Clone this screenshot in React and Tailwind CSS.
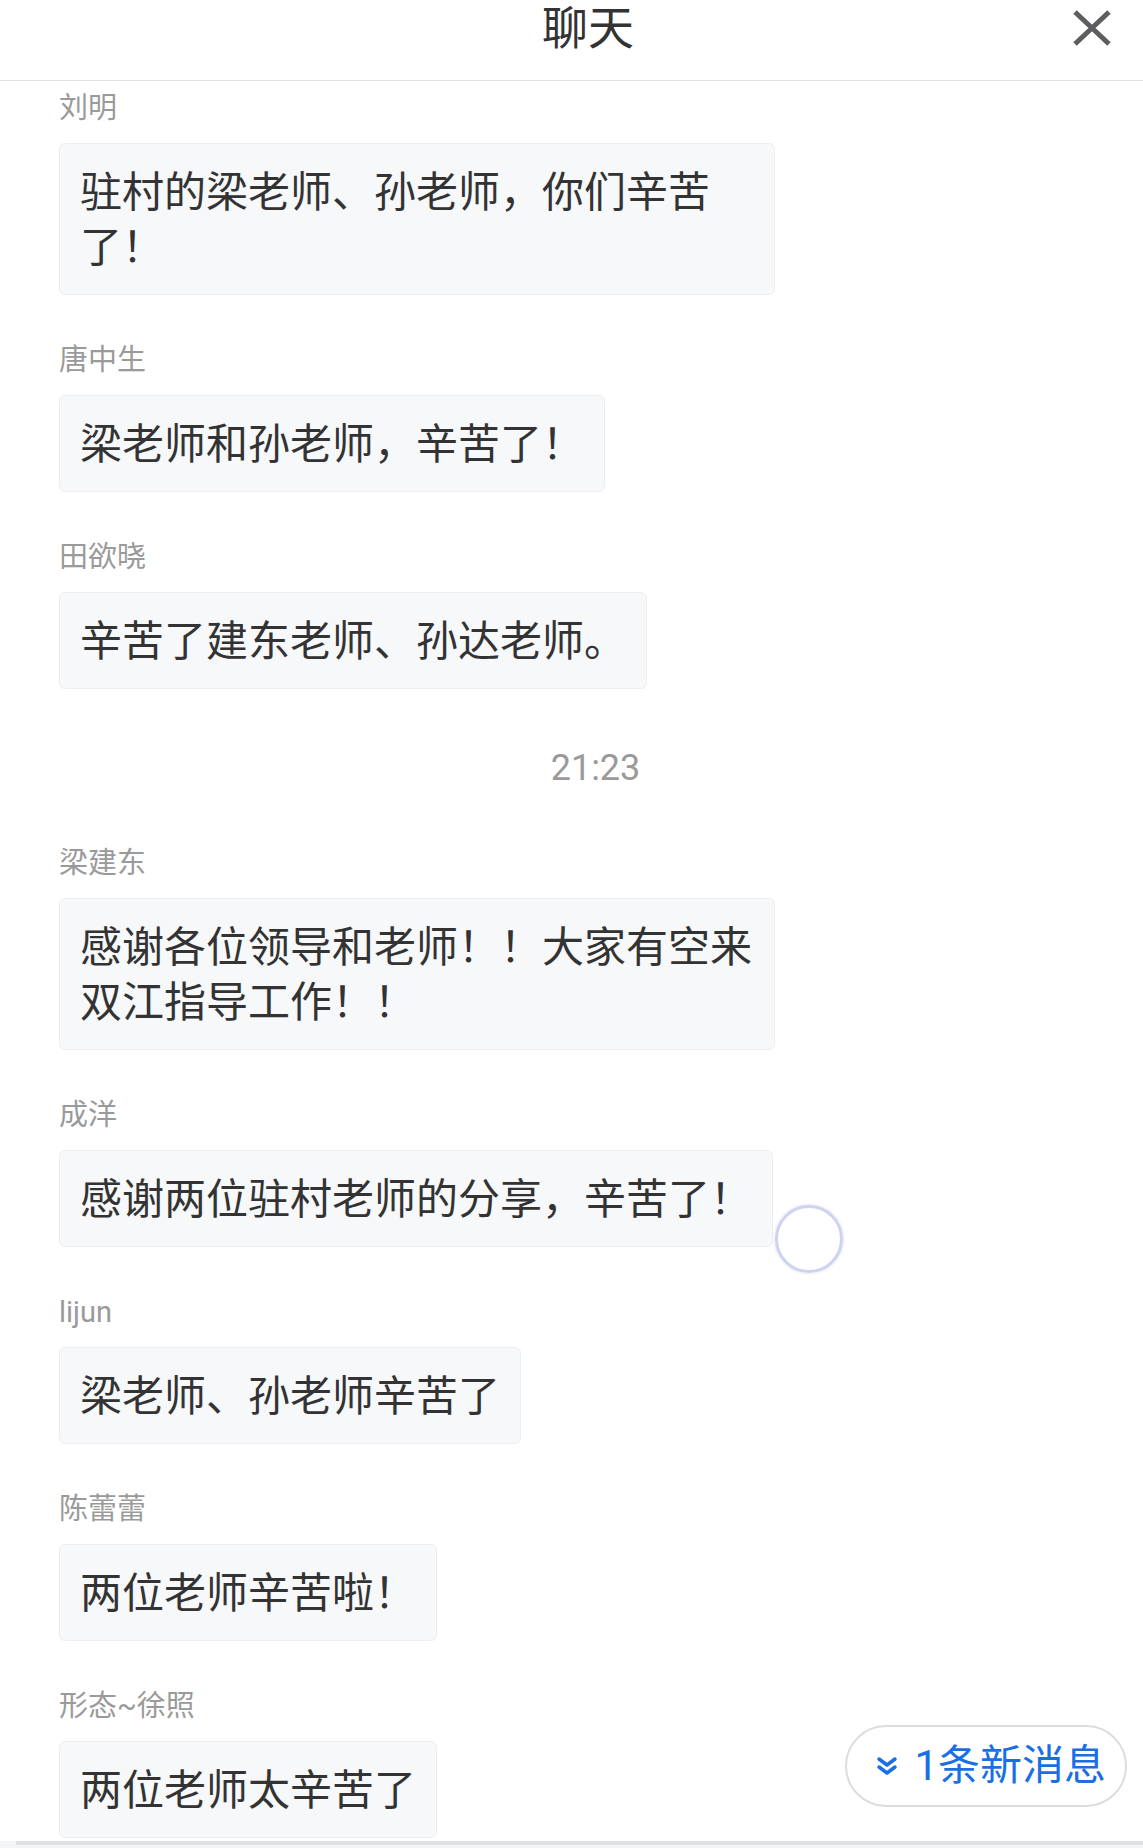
import React from "react";

const FONT = { fontFamily: 'Roboto, "Noto Sans CJK SC", "Noto Sans", sans-serif' };

// Chat history, in display order. A "time" entry is a centred timestamp row.
const MESSAGES = [
  { name: "刘明", text: "驻村的梁老师、孙老师，你们辛苦了！" },
  { name: "唐中生", text: "梁老师和孙老师，辛苦了！" },
  { name: "田欲晓", text: "辛苦了建东老师、孙达老师。" },
  { time: "21:23" },
  { name: "梁建东", text: "感谢各位领导和老师！！大家有空来双江指导工作！！" },
  { name: "成洋", text: "感谢两位驻村老师的分享，辛苦了！" },
  { name: "lijun", text: "梁老师、孙老师辛苦了" },
  { name: "陈蕾蕾", text: "两位老师辛苦啦！" },
  { name: "形态~徐照", text: "两位老师太辛苦了" },
];

function CloseIcon() {
  return (
    <svg width="40" height="36" viewBox="0 0 40 36" fill="none">
      <path d="M3 2 L37 34 M37 2 L3 34" stroke="#5c5d60" strokeWidth="5" />
    </svg>
  );
}

function ChevronsDown() {
  return (
    <svg width="22" height="20" viewBox="0 0 22 20" fill="none">
      <path
        d="M3 3 L11 9 L19 3 M3 11 L11 17 L19 11"
        stroke="#1a6fe3"
        strokeWidth="3.5"
        strokeLinecap="round"
        strokeLinejoin="round"
      />
    </svg>
  );
}

function Message({ name, text }) {
  return (
    <div className="flex flex-col items-start">
      <div className="text-[29px] leading-[34px] text-[#9a9a9a]">{name}</div>
      <div className="mt-[18px] max-w-[716px] rounded-[6px] border border-[#eceef1] bg-[#f7f8fa] px-[20px] pb-[19px] pt-[21px] text-[42px] leading-[55px] text-[#333333]">
        {text}
      </div>
    </div>
  );
}

export default function App() {
  return (
    <div className="relative h-[1848px] w-full overflow-hidden bg-white" style={FONT}>
      {/* ── Header ───────────────────────────────────────────── */}
      <div className="h-[81px] border-b border-[#e3e3e3]">
        <div className="flex h-[56px] items-center">
          <div className="flex flex-1 justify-center pl-[104px] text-[46px] leading-[56px] text-[#333333]">
            聊天
          </div>
          <div className="mr-[31px] flex w-[40px] items-center">
            <CloseIcon />
          </div>
        </div>
      </div>

      {/* ── Message list ─────────────────────────────────────── */}
      <div className="flex flex-col gap-[48px] pl-[59px] pt-[10px]">
        {MESSAGES.map((m, i) =>
          m.time ? (
            <div
              key={i}
              className="-ml-[59px] flex h-[61px] items-center justify-center pl-[48px] text-[36px] text-[#9a9a9a]"
            >
              {m.time}
            </div>
          ) : (
            <Message key={i} name={m.name} text={m.text} />
          )
        )}
      </div>

      {/* ── Loading ring ─────────────────────────────────────── */}
      <div className="absolute left-[775px] top-[1205px] h-[68px] w-[68px] rounded-full border-[3px] border-[#cfd3ef] shadow-[0_0_3px_rgba(150,160,225,0.45)]" />

      {/* ── New message pill ─────────────────────────────────── */}
      <div className="absolute bottom-[41px] right-[16px] flex h-[82px] items-center gap-[16px] rounded-full border-2 border-[#dcdde1] bg-white pl-[29px] pr-[19px]">
        <ChevronsDown />
        <span className="text-[42px] leading-none text-[#1a6fe3]">1条新消息</span>
      </div>

      {/* ── Bottom scroll track ──────────────────────────────── */}
      <div className="absolute bottom-0 left-0 right-0 h-[7px] bg-[#f4f5f7]">
        <div className="ml-[16px] h-[4px] bg-[#dfe1e5]" />
      </div>
    </div>
  );
}
